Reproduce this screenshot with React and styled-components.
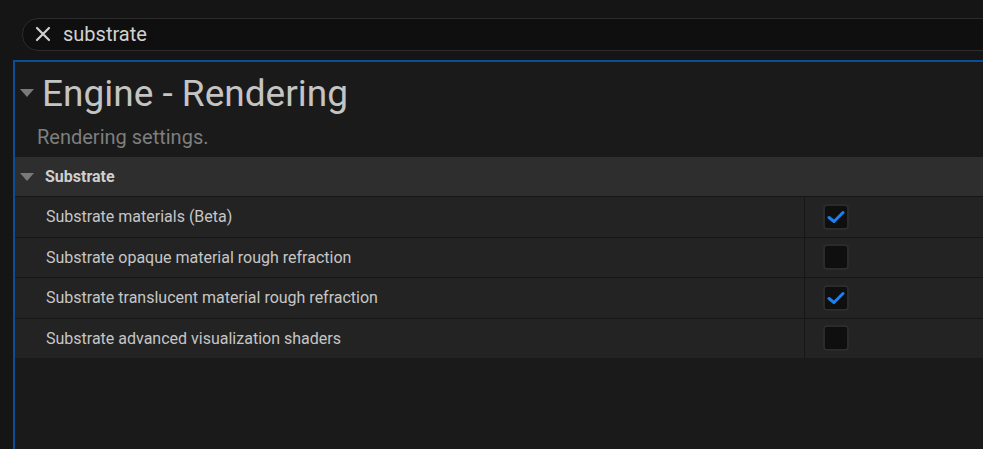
import React from 'react';
import styled, { createGlobalStyle } from 'styled-components';

const GlobalStyle = createGlobalStyle`
  html, body {
    margin: 0;
    padding: 0;
    background: #151515;
    font-family: Roboto, "Liberation Sans", sans-serif;
    overflow: hidden;
  }
`;

const Page = styled.div`
  height: 449px;
  display: flex;
  flex-direction: column;
  overflow: hidden;
`;

const SearchBar = styled.div`
  display: flex;
  align-items: center;
  gap: 12px;
  height: 29px;
  margin: 18px -40px 0 22px;
  padding: 0 12px 2px;
  background: #0f0f0f;
  border: 1px solid #2c2c2c;
  border-radius: 16px;
  color: #d2d2d2;
  font-size: 20px;
`;

const Panel = styled.div`
  flex: 1;
  margin: 9px 0 0 13px;
  background: #1a1a1a;
  border-left: 2px solid #0b4d96;
  border-top: 2px solid #0b4d96;
`;

const TitleRow = styled.div`
  display: flex;
  align-items: center;
  gap: 8px;
  padding: 7px 0 0 5px;
  height: 48px;
`;

const Title = styled.h1`
  margin: 0;
  font-size: 37px;
  font-weight: 400;
  color: #c4c4c4;
  line-height: 1;
`;

const Description = styled.div`
  padding: 8px 0 0 22px;
  height: 32px;
  font-size: 20px;
  color: #7e7e7e;
`;

const Caret = styled.span`
  width: 0;
  height: 0;
  border-left: ${({ $w }) => $w / 2}px solid transparent;
  border-right: ${({ $w }) => $w / 2}px solid transparent;
  border-top: ${({ $h }) => $h}px solid #7a7a7a;
`;

const Table = styled.div`
  display: flex;
  flex-direction: column;
  gap: 1px;
  background: #161616;
`;

const Category = styled.div`
  display: flex;
  align-items: center;
  gap: 11px;
  height: 39px;
  padding-left: 5px;
  background: #2e2e2e;
  color: #cfcfcf;
  font-size: 16px;
  font-weight: 700;
`;

const Row = styled.div`
  display: grid;
  grid-template-columns: 790px 1fr;
  height: 39.5px;
  background: #232323;
`;

const Label = styled.div`
  display: flex;
  align-items: center;
  padding-left: 31px;
  border-right: 1px solid #161616;
  color: #c6c6c6;
  font-size: 16px;
`;

const Value = styled.div`
  display: flex;
  align-items: center;
  padding-left: 18px;
`;

const Box = styled.div`
  width: 22px;
  height: 22px;
  border: 2px solid #2b2b2b;
  border-radius: 4px;
  background: #0f0f0f;
  display: flex;
  align-items: center;
  justify-content: center;
`;

const CloseIcon = () => (
  <svg width="16" height="16" viewBox="0 0 16 16">
    <path d="M2 2 L14 14 M14 2 L2 14" stroke="#cfcfcf" strokeWidth="2.2" strokeLinecap="round" />
  </svg>
);

const Check = () => (
  <svg width="18" height="14" viewBox="0 0 18 14">
    <path d="M2 7.5 L7 11.5 L16 2.5" fill="none" stroke="#1c80f0" strokeWidth="3" strokeLinecap="round" strokeLinejoin="round" />
  </svg>
);

const settings = [
  { label: 'Substrate materials (Beta)', on: true },
  { label: 'Substrate opaque material rough refraction', on: false },
  { label: 'Substrate translucent material rough refraction', on: true },
  { label: 'Substrate advanced visualization shaders', on: false },
];

export default function App() {
  return (
    <Page>
      <GlobalStyle />
      <SearchBar>
        <CloseIcon />
        <span>substrate</span>
      </SearchBar>
      <Panel>
        <TitleRow>
          <Caret $w={14} $h={8} />
          <Title>Engine - Rendering</Title>
        </TitleRow>
        <Description>Rendering settings.</Description>
        <Table>
          <Category>
            <Caret $w={14} $h={8} />
            Substrate
          </Category>
          {settings.map((s) => (
            <Row key={s.label}>
              <Label>{s.label}</Label>
              <Value>
                <Box>{s.on && <Check />}</Box>
              </Value>
            </Row>
          ))}
        </Table>
      </Panel>
    </Page>
  );
}
